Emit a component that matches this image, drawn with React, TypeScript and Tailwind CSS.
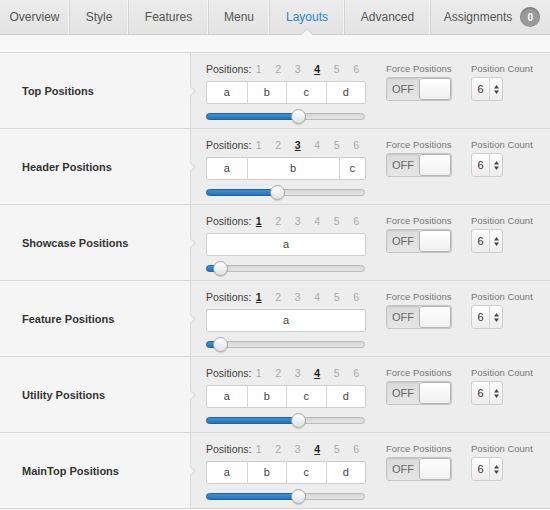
import React from 'react';

const tabs = [
  { name: 'Overview', w: 'w-[70px]' },
  { name: 'Style', w: 'w-[59px]' },
  { name: 'Features', w: 'w-[80px]' },
  { name: 'Menu', w: 'w-[61px]' },
  { name: 'Layouts', w: 'w-[75px]', active: true },
  { name: 'Advanced', w: 'w-[86px]' },
];

const spanClass: Record<number, string> = {
  2: 'col-span-2',
  3: 'col-span-3',
  7: 'col-span-7',
  12: 'col-span-12',
};

const rows = [
  { label: 'Top Positions', selected: 4, cells: [3, 3, 3, 3], thumb: 92 },
  { label: 'Header Positions', selected: 3, cells: [3, 7, 2], thumb: 71 },
  { label: 'Showcase Positions', selected: 1, cells: [12], thumb: 14 },
  { label: 'Feature Positions', selected: 1, cells: [12], thumb: 14 },
  { label: 'Utility Positions', selected: 4, cells: [3, 3, 3, 3], thumb: 92 },
  { label: 'MainTop Positions', selected: 4, cells: [3, 3, 3, 3], thumb: 92 },
];

const letters = ['a', 'b', 'c', 'd', 'e', 'f'];

function PositionRow({ label, selected, cells, thumb }: (typeof rows)[number]) {
  return (
    <div className="flex h-[76px] border-b border-[#d9d9d9]">
      <div className="flex w-[190px] items-center bg-[#f5f5f5] pl-[22px] pt-[2px] text-[11px] font-bold text-[#333]">
        {label}
      </div>
      <div className="relative flex flex-1 border-l border-[#d9d9d9] bg-[#ededed] pl-[15px] pt-[9px]">
        {/* notch */}
        <div className="absolute left-[-5px] top-[34px] h-[8px] w-[8px] rotate-45 border-r border-t border-[#d9d9d9] bg-[#f5f5f5]" />

        <div className="w-[160px]">
          <div className="flex h-[14px] items-center text-[10.5px] leading-[14px] text-[#444]">
            <span className="w-[43px]">Positions:</span>
            {[1, 2, 3, 4, 5, 6].map((n) => (
              <span
                key={n}
                className={
                  n === selected
                    ? 'w-[19.5px] text-center font-bold text-[#222] underline'
                    : 'w-[19.5px] text-center text-[#aaa]'
                }
              >
                {n}
              </span>
            ))}
          </div>
          <div className="mt-[5px] grid h-[23px] grid-cols-12 overflow-hidden rounded-[2px] border border-[#cfcfcf] bg-white">
            {cells.map((s, i) => (
              <div
                key={i}
                className={`${spanClass[s]} flex items-center justify-center text-[11px] text-[#444] ${
                  i > 0 ? 'border-l border-[#d6d6d6]' : ''
                }`}
              >
                {letters[i]}
              </div>
            ))}
          </div>
          <div className="relative mt-[9px] h-[7px] w-[159px] rounded-full border border-[#b9b9b9] bg-gradient-to-b from-[#d6d6d6] to-[#e6e6e6]">
            <div
              className="absolute left-[-1px] top-[-1px] h-[7px] rounded-full border border-[#1e64a0] bg-gradient-to-b from-[#3d93d6] to-[#2473b5]"
              style={{ width: thumb + 1 }}
            />
            <div
              className="absolute top-[-5px] h-[15px] w-[15px] rounded-full border border-[#a9a9a9] bg-gradient-to-b from-[#ffffff] to-[#e2e2e2] shadow-[0_1px_1px_rgba(0,0,0,0.15)]"
              style={{ left: thumb - 8 }}
            />
          </div>
        </div>

        <div className="ml-[20px] w-[85px]">
          <div className="h-[13px] text-[9.5px] leading-[13px] text-[#777]">Force Positions</div>
          <div className="mt-[2px] flex h-[24px] w-[66px] overflow-hidden rounded-[3px] border border-[#c4c4c4]">
            <div className="flex w-[32px] items-center justify-center bg-gradient-to-b from-[#dcdcdc] to-[#e6e6e6] text-[11px] text-[#666] shadow-[inset_0_1px_2px_rgba(0,0,0,0.12)]">
              OFF
            </div>
            <div className="flex-1 rounded-[3px] border border-[#b5b5b5] bg-gradient-to-b from-[#ffffff] to-[#f0f0f0]" />
          </div>
        </div>

        <div>
          <div className="h-[13px] text-[9.5px] leading-[13px] text-[#777]">Position Count</div>
          <div className="mt-[2px] flex h-[24px] w-[32px] overflow-hidden rounded-[3px] border border-[#cfcfcf] bg-gradient-to-b from-[#ffffff] to-[#ececec]">
            <div className="flex w-[17px] items-center justify-center text-[11px] text-[#333]">6</div>
            <div className="flex flex-1 flex-col items-center justify-center border-l border-[#d6d6d6] text-[#444]">
              <svg width="5" height="9" viewBox="0 0 5 9">
                <path d="M2.5 0 L5 3.5 H0 Z" fill="#444" />
                <path d="M2.5 9 L5 5.5 H0 Z" fill="#444" />
              </svg>
            </div>
          </div>
        </div>
      </div>
    </div>
  );
}

export default function App() {
  return (
    <div className="h-[510px] w-[550px] overflow-hidden bg-[#f5f5f5] font-[family-name:Liberation_Sans,Arial,sans-serif]">
      {/* Tab bar */}
      <div className="flex h-[35px] border-b border-[#cdcdcd] bg-gradient-to-b from-[#ececec] to-[#e3e3e3]">
        {tabs.map((t) => (
          <div
            key={t.name}
            className={`relative flex ${t.w} items-center justify-center border-r border-[#d4d4d4] text-[12px] ${
              t.active ? 'text-[#2b86c5]' : 'text-[#555]'
            } shadow-[inset_-1px_0_0_#f4f4f4]`}
          >
            {t.name}
            {t.active && (
              <div className="absolute bottom-[-5px] left-1/2 h-[9px] w-[9px] -translate-x-1/2 rotate-45 border-l border-t border-[#cdcdcd] bg-[#f7f7f7]" />
            )}
          </div>
        ))}
        <div className="flex flex-1 items-center justify-center gap-[8px] pl-[3px] text-[12px] text-[#555]">
          Assignments
          <span className="flex h-[20px] w-[20px] items-center justify-center rounded-full bg-[#9a9a9a] text-[10px] font-bold text-white shadow-[inset_0_1px_2px_rgba(0,0,0,0.3)]">
            0
          </span>
        </div>
      </div>
      <div className="h-[18px] border-b border-[#d9d9d9] bg-[#f8f8f8]" />
      {rows.map((r) => (
        <PositionRow key={r.label} {...r} />
      ))}
    </div>
  );
}
